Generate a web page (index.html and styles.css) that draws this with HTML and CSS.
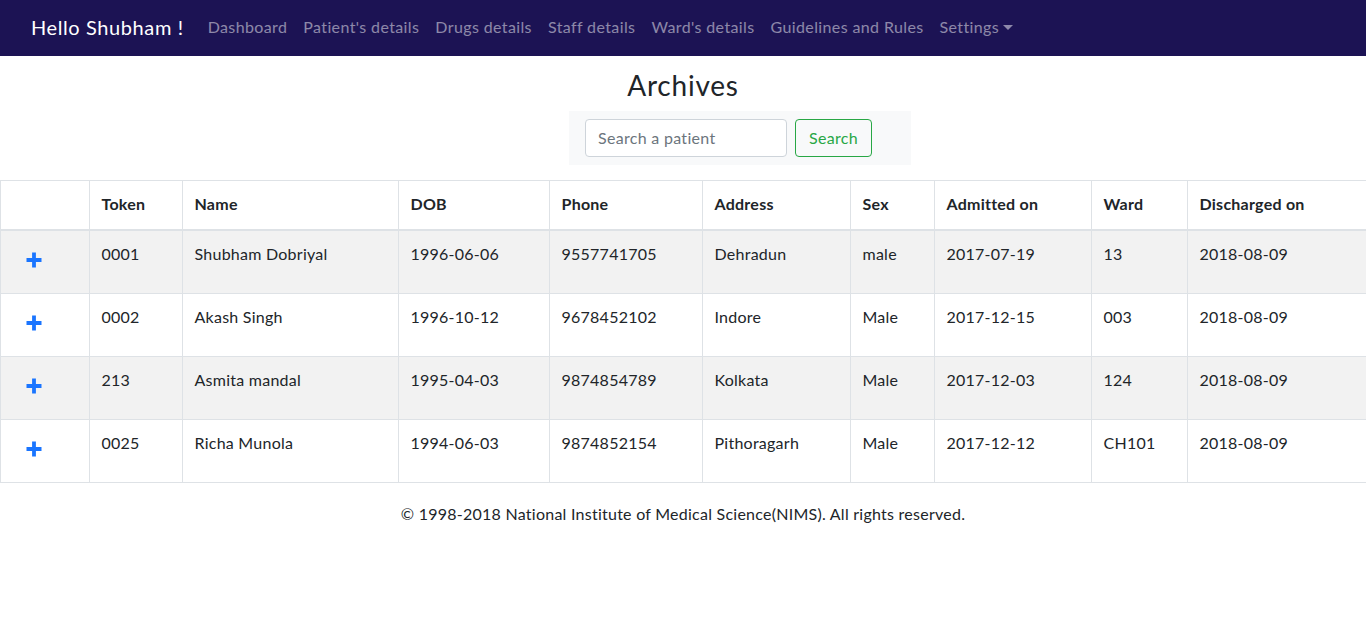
FILE: index.html
```html
<!DOCTYPE html>
<html>
<head>
<meta charset="utf-8">
<link rel="stylesheet" href="styles.css">
</head>
<body>
<nav class="navbar">
  <span class="brand">Hello Shubham !</span>
  <ul class="nav">
    <li>Dashboard</li>
    <li>Patient's details</li>
    <li>Drugs details</li>
    <li>Staff details</li>
    <li>Ward's details</li>
    <li>Guidelines and Rules</li>
    <li class="dropdown">Settings</li>
  </ul>
</nav>
<main>
  <h3 class="title">Archives</h3>
  <div class="search-wrap">
    <form class="search">
      <input class="search-input" type="text" placeholder="Search a patient">
      <button class="search-btn" type="button">Search</button>
    </form>
  </div>
  <table class="table">
    <colgroup>
      <col class="c1"><col class="c2"><col class="c3"><col class="c4"><col class="c5">
      <col class="c6"><col class="c7"><col class="c8"><col class="c9"><col class="c10">
    </colgroup>
    <thead>
      <tr><th></th><th>Token</th><th>Name</th><th>DOB</th><th>Phone</th><th>Address</th><th>Sex</th><th>Admitted on</th><th>Ward</th><th>Discharged on</th></tr>
    </thead>
    <tbody>
      <tr><td><span class="plus-btn"><svg width="16" height="16" viewBox="0 0 16 16"><path d="M8 0.5v15M0.5 8h15" stroke="#1a75ff" stroke-width="3.8"/></svg></span></td><td>0001</td><td>Shubham Dobriyal</td><td>1996-06-06</td><td>9557741705</td><td>Dehradun</td><td>male</td><td>2017-07-19</td><td>13</td><td>2018-08-09</td></tr>
      <tr><td><span class="plus-btn"><svg width="16" height="16" viewBox="0 0 16 16"><path d="M8 0.5v15M0.5 8h15" stroke="#1a75ff" stroke-width="3.8"/></svg></span></td><td>0002</td><td>Akash Singh</td><td>1996-10-12</td><td>9678452102</td><td>Indore</td><td>Male</td><td>2017-12-15</td><td>003</td><td>2018-08-09</td></tr>
      <tr><td><span class="plus-btn"><svg width="16" height="16" viewBox="0 0 16 16"><path d="M8 0.5v15M0.5 8h15" stroke="#1a75ff" stroke-width="3.8"/></svg></span></td><td>213</td><td>Asmita mandal</td><td>1995-04-03</td><td>9874854789</td><td>Kolkata</td><td>Male</td><td>2017-12-03</td><td>124</td><td>2018-08-09</td></tr>
      <tr><td><span class="plus-btn"><svg width="16" height="16" viewBox="0 0 16 16"><path d="M8 0.5v15M0.5 8h15" stroke="#1a75ff" stroke-width="3.8"/></svg></span></td><td>0025</td><td>Richa Munola</td><td>1994-06-03</td><td>9874852154</td><td>Pithoragarh</td><td>Male</td><td>2017-12-12</td><td>CH101</td><td>2018-08-09</td></tr>
    </tbody>
  </table>
  <footer class="footer">© 1998-2018 National Institute of Medical Science(NIMS). All rights reserved.</footer>
</main>
</body>
</html>
```
FILE: styles.css
```css
* { box-sizing: border-box; }
html, body { margin: 0; padding: 0; }
body {
  font-family: "Lato", "Open Sans", sans-serif;
  font-size: 16px;
  line-height: 1.5;
  color: #212529;
  background: #fff;
  letter-spacing: 0.25px;
}
.navbar {
  height: 56px;
  background: #1c1354;
  display: flex;
  align-items: center;
  padding: 0 16px 2px 31px;
}
.brand {
  color: #fff;
  font-size: 20px;
  margin-right: 16px;
  white-space: nowrap;
  letter-spacing: 0.6px;
}
.nav {
  list-style: none;
  margin: 0;
  padding: 0;
  display: flex;
}
.nav li {
  color: rgba(255,255,255,0.5);
  padding: 0 8px;
  white-space: nowrap;
  letter-spacing: 0.38px;
}
.dropdown::after {
  content: "";
  display: inline-block;
  margin-left: 4px;
  vertical-align: 3px;
  border-top: 5px solid;
  border-left: 5px solid transparent;
  border-right: 5px solid transparent;
}
main { display: flex; flex-direction: column; align-items: center; }
.title {
  margin: 13px 0 8px;
  font-size: 28px;
  font-weight: 400;
  line-height: 1.2;
  letter-spacing: 0.8px;
}
.search-wrap {
  align-self: flex-start;
  margin-left: 569px;
  background: #f8f9fa;
  padding: 8px 16px;
  width: 342px;
}
.search { display: flex; gap: 8px; }
.search-input {
  width: 202px;
  height: 38px;
  border: 1px solid #ced4da;
  border-radius: 4px;
  padding: 6px 12px;
  font: inherit;
  letter-spacing: 0.3px;
  color: #495057;
}
.search-input::placeholder { color: #6c757d; }
.search-btn {
  height: 38px;
  border: 1px solid #28a745;
  border-radius: 4px;
  background: transparent;
  color: #28a745;
  font: inherit;
  letter-spacing: 0.3px;
  padding: 6px 13px;
}
.table {
  width: 1366px;
  margin-top: 15px;
  border-collapse: collapse;
  table-layout: fixed;
}
.c1 { width: 89px; } .c2 { width: 93px; } .c3 { width: 216px; } .c4 { width: 151px; }
.c5 { width: 153px; } .c6 { width: 148px; } .c7 { width: 84px; } .c8 { width: 157px; }
.c9 { width: 96px; } .c10 { width: 179px; }
.table th, .table td {
  border: 1px solid #dee2e6;
  padding: 11px 12px 13px;
  text-align: left;
  vertical-align: top;
}
.table td:first-child { padding-top: 12px; padding-bottom: 12px; }
.table th { font-weight: 700; border-bottom-width: 2px; }
.table tbody tr:nth-child(odd) { background: #f2f2f2; }
.plus-btn {
  display: inline-flex;
  align-items: center;
  height: 38px;
  padding: 0 12px 3px 13px;
}
.plus-btn svg { display: block; }
.footer {
  margin-top: 19px;
  text-align: center;
}
```
